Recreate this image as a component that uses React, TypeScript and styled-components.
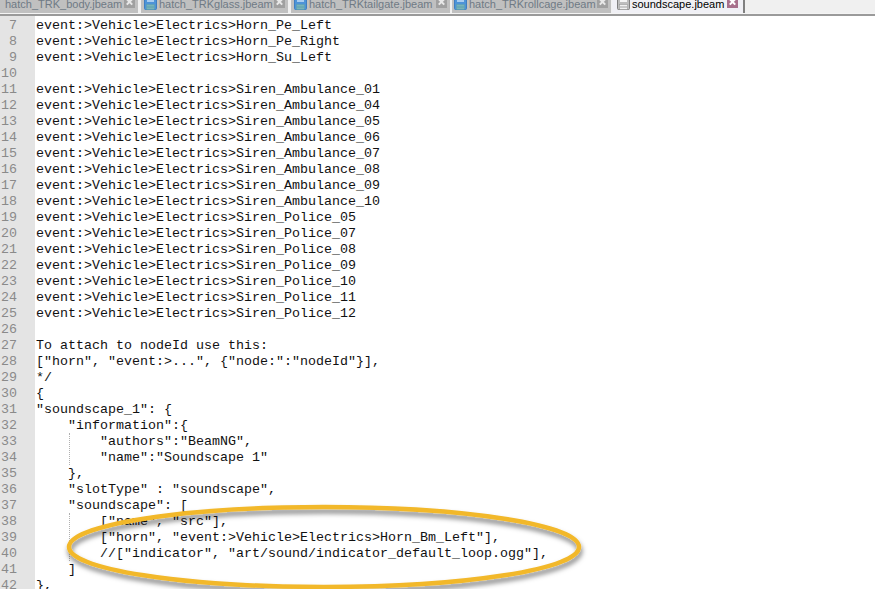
import React from "react";
import styled, { createGlobalStyle } from "styled-components";

const Global = createGlobalStyle`
  html, body { margin: 0; padding: 0; background: #fff; }
  body { width: 875px; height: 589px; overflow: hidden; }
`;

const Page = styled.div`
  position: relative;
  width: 875px;
  height: 589px;
  overflow: hidden;
  display: flex;
  flex-direction: column;
  background: #fff;
`;

const TabBar = styled.div`
  height: 13px;
  flex: none;
  display: flex;
  background: #f0f0f0;
  overflow: hidden;
`;

const Tab = styled.div<{ $active?: boolean; $w: number; $gap: number; $pad: number }>`
  width: ${(p) => p.$w}px;
  margin-right: ${(p) => p.$gap}px;
  padding-left: ${(p) => p.$pad}px;
  flex: none;
  height: 13px;
  box-sizing: border-box;
  display: flex;
  align-items: flex-start;
  background: ${(p) => (p.$active ? "#f0f0f5" : "#c0c0c0")};
  font: 11px/14px "Liberation Sans", Arial, sans-serif;
  color: ${(p) => (p.$active ? "#000" : "#6f7a85")};
  white-space: nowrap;
  overflow: hidden;
`;

const Separator = styled.div`
  width: 2px;
  height: 13px;
  flex: none;
  background: #808080;
`;

const TabLabel = styled.span`
  flex: 1;
  margin-top: -3px;
  margin-left: 2px;
`;

const Rule = styled.div`
  height: 3px;
  flex: none;
  background: linear-gradient(#f4f4f4 0 1px, #9a9a9a 1px 3px);
`;

const Editor = styled.div`
  flex: 1;
  min-height: 0;
  padding-top: 2px;
  background: linear-gradient(90deg, #e4e4e4 35px, #fff 35px);
`;

const Row = styled.div`
  display: flex;
  height: 16px;
  font: 13.33px/16px "Liberation Mono", "Courier New", monospace;
  white-space: pre;
`;

const Num = styled.span`
  width: 36px;
  padding-right: 19px;
  box-sizing: border-box;
  text-align: right;
  color: #8a8a8a;
  flex: none;
`;

const Text = styled.span`
  color: #111;
`;

const Guide = styled.span<{ $top: number; $h: number }>`
  position: absolute;
  left: 69px;
  top: ${(p) => p.$top}px;
  height: ${(p) => p.$h}px;
  border-left: 1px dotted #b0b0b0;
`;

const Overlay = styled.svg`
  position: absolute;
  left: 0;
  top: 0;
  pointer-events: none;
`;

const TabIcon = styled.svg`
  flex: none;
`;

const CloseIcon = styled.svg<{ $right: number }>`
  flex: none;
  margin-left: auto;
  margin-right: ${(p) => p.$right}px;
`;

const Icon = ({ blue }: { blue?: boolean }) => (
  <TabIcon width="13" height="10" viewBox="0 0 13 10">
    <rect x="0.5" y="-4" width="12" height="13.5" rx="1" fill={blue ? "#4d93d8" : "#bdbdbd"} stroke={blue ? "#3f7fc0" : "#808080"} />
    <rect x="2.5" y="4.5" width="8" height="5" fill={blue ? "#79b3b8" : "#f0f0f0"} stroke={blue ? "#5aa0b0" : "#909090"} strokeWidth="0.5" />
    <path d="M3 7 H10" stroke={blue ? "#5aa0b0" : "#a0a0a0"} />
    <rect x="3" y="-4" width="7" height="6" fill={blue ? "#a9cdf0" : "#f4f4f4"} />
  </TabIcon>
);

const Close = ({ active, right }: { active?: boolean; right: number }) => (
  <CloseIcon $right={right} width="11" height="8" viewBox="0 4 12 8.7">
    <rect width="12" height="13" fill={active ? "#a8708c" : "#a0a0a0"} />
    <path d="M3 3 L9 9 M9 3 L3 9" stroke={active ? "#fff" : "#e8e8e8"} strokeWidth="2.2" />
  </CloseIcon>
);

const lines: [number, string][] = [
  [7, "event:>Vehicle>Electrics>Horn_Pe_Left"],
  [8, "event:>Vehicle>Electrics>Horn_Pe_Right"],
  [9, "event:>Vehicle>Electrics>Horn_Su_Left"],
  [10, ""],
  [11, "event:>Vehicle>Electrics>Siren_Ambulance_01"],
  [12, "event:>Vehicle>Electrics>Siren_Ambulance_04"],
  [13, "event:>Vehicle>Electrics>Siren_Ambulance_05"],
  [14, "event:>Vehicle>Electrics>Siren_Ambulance_06"],
  [15, "event:>Vehicle>Electrics>Siren_Ambulance_07"],
  [16, "event:>Vehicle>Electrics>Siren_Ambulance_08"],
  [17, "event:>Vehicle>Electrics>Siren_Ambulance_09"],
  [18, "event:>Vehicle>Electrics>Siren_Ambulance_10"],
  [19, "event:>Vehicle>Electrics>Siren_Police_05"],
  [20, "event:>Vehicle>Electrics>Siren_Police_07"],
  [21, "event:>Vehicle>Electrics>Siren_Police_08"],
  [22, "event:>Vehicle>Electrics>Siren_Police_09"],
  [23, "event:>Vehicle>Electrics>Siren_Police_10"],
  [24, "event:>Vehicle>Electrics>Siren_Police_11"],
  [25, "event:>Vehicle>Electrics>Siren_Police_12"],
  [26, ""],
  [27, "To attach to nodeId use this:"],
  [28, '["horn", "event:>...", {"node:":"nodeId"}],'],
  [29, "*/"],
  [30, "{"],
  [31, '"soundscape_1": {'],
  [32, '    "information":{'],
  [33, '        "authors":"BeamNG",'],
  [34, '        "name":"Soundscape 1"'],
  [35, "    },"],
  [36, '    "slotType" : "soundscape",'],
  [37, '    "soundscape": ['],
  [38, '        ["name", "src"],'],
  [39, '        ["horn", "event:>Vehicle>Electrics>Horn_Bm_Left"],'],
  [40, '        //["indicator", "art/sound/indicator_default_loop.ogg"],'],
  [41, "    ]"],
  [42, "},"],
];

const tabs = [
  { label: "hatch_TRK_body.jbeam", w: 138, gap: 3, pad: 3, noIcon: true },
  { label: "hatch_TRKglass.jbeam", w: 147, gap: 3, pad: 3 },
  { label: "hatch_TRKtailgate.jbeam", w: 159, gap: 2, pad: 3 },
  { label: "hatch_TRKrollcage.jbeam", w: 159, gap: 1, pad: 2 },
];

export default function App() {
  return (
    <Page>
      <Global />
      <TabBar>
        {tabs.map((t) => (
          <Tab key={t.label} $w={t.w} $gap={t.gap} $pad={t.pad}>
            {!t.noIcon && <Icon blue />}
            <TabLabel>{t.label}</TabLabel>
            <Close right={3} />
          </Tab>
        ))}
        <Tab $active $w={131} $gap={0} $pad={5}>
          <Icon />
          <TabLabel>soundscape.jbeam</TabLabel>
          <Close active right={5} />
        </Tab>
        <Separator />
      </TabBar>
      <Rule />
      <Editor>
        {lines.map(([n, s]) => (
          <Row key={n}>
            <Num>{n}</Num>
            <Text>{s}</Text>
          </Row>
        ))}
      </Editor>
      <Guide $top={433} $h={32} />
      <Guide $top={513} $h={48} />
      <Overlay width="875" height="589" viewBox="0 0 875 589">
        <defs>
          <filter id="sh" x="-10%" y="-30%" width="120%" height="170%">
            <feDropShadow dx="1" dy="4" stdDeviation="2.5" floodColor="#000" floodOpacity="0.5" />
          </filter>
        </defs>
        <ellipse
          cx="324"
          cy="547"
          rx="255"
          ry="40"
          fill="none"
          stroke="#f2b82c"
          strokeWidth="4.5"
          filter="url(#sh)"
        />
      </Overlay>
    </Page>
  );
}
